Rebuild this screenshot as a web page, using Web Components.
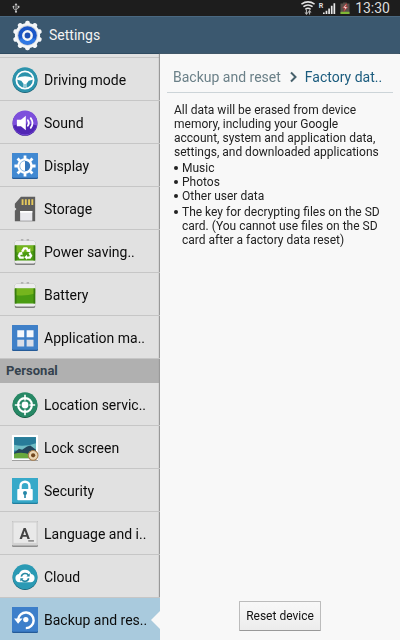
<!DOCTYPE html>
<html lang="en">
<head>
<meta charset="utf-8">
<meta name="viewport" content="width=device-width, initial-scale=1">
<title>Settings</title>
<style>
html, body {
    height: 100%;
    margin: 0;
}

body {
    font-family: Roboto, "Liberation Sans", sans-serif;
    background: #f8f8f8;
    color: #111;
}
</style>
</head>
<body>

<settings-layout>
    <status-bar slot="status" time="13:30"></status-bar>
    <app-bar slot="header">Settings</app-bar>

    <settings-item slot="sidebar" icon="driving">Driving mode</settings-item>
    <settings-item slot="sidebar" icon="sound">Sound</settings-item>
    <settings-item slot="sidebar" icon="display">Display</settings-item>
    <settings-item slot="sidebar" icon="storage">Storage</settings-item>
    <settings-item slot="sidebar" icon="power">Power saving..</settings-item>
    <settings-item slot="sidebar" icon="battery">Battery</settings-item>
    <settings-item slot="sidebar" icon="apps">Application ma..</settings-item>
    <settings-section slot="sidebar">Personal</settings-section>
    <settings-item slot="sidebar" icon="location">Location servic..</settings-item>
    <settings-item slot="sidebar" icon="lock">Lock screen</settings-item>
    <settings-item slot="sidebar" icon="security">Security</settings-item>
    <settings-item slot="sidebar" icon="language">Language and i..</settings-item>
    <settings-item slot="sidebar" icon="cloud">Cloud</settings-item>
    <settings-item slot="sidebar" icon="backup" selected>Backup and res..</settings-item>

    <reset-panel slot="main">
        <span slot="parent">Backup and reset</span>
        <span slot="current">Factory dat..</span>
        <span slot="action">Reset device</span>
    </reset-panel>
</settings-layout>

<script>
const ICONS = {
    gear: `
        <g fill="#f4f6f8">
            <circle cx="16" cy="16" r="13"/>
            <rect x="13.6" y="0.8" width="4.8" height="30.4" rx="2"/>
            <rect x="13.6" y="0.8" width="4.8" height="30.4" rx="2" transform="rotate(36 16 16)"/>
            <rect x="13.6" y="0.8" width="4.8" height="30.4" rx="2" transform="rotate(72 16 16)"/>
            <rect x="13.6" y="0.8" width="4.8" height="30.4" rx="2" transform="rotate(108 16 16)"/>
            <rect x="13.6" y="0.8" width="4.8" height="30.4" rx="2" transform="rotate(144 16 16)"/>
        </g>
        <circle cx="16" cy="16" r="10.6" fill="#cdd3da"/>
        <circle cx="16" cy="16" r="9.6" fill="#1a56c8"/>
        <path d="M7 19a9.6 9.6 0 0 0 18 0z" fill="#2f78e4"/>
        <circle cx="16" cy="16" r="4.3" fill="#1d4fb4" stroke="#f4f6f8" stroke-width="2.6"/>`,
    driving: `
        <circle cx="16" cy="16.6" r="15.4" fill="#1b6478"/>
        <circle cx="16" cy="15.6" r="15.2" fill="#2c93ac"/>
        <circle cx="16" cy="16" r="10.6" fill="none" stroke="#fff" stroke-width="2.2"/>
        <path d="M6 13.500q10-4.500 20 0l-.4 2.200-5 1.300-2.800 3.500v5h-3.600v-5l-2.800-3.500-5-1.300z" fill="#fff"/>
        <path d="M16 21v5" stroke="#2c93ac" stroke-width="1.200"/>`,
    sound: `
        <circle cx="16" cy="16.500" r="15.300" fill="#3f1c9c"/>
        <circle cx="16" cy="15.700" r="15.200" fill="#7d4fdc"/>
        <path d="M1.500 19a15 15 0 0 0 29 0q-14-5-29 0z" fill="#5026b4"/>
        <path d="M6 12h5l6-5v18l-6-5H6z" fill="#fff"/>
        <path d="M19.500 12.500q2.600 3.500 0 7M23 10q4.500 6 0 12" fill="none" stroke="#fff" stroke-width="2.100" stroke-linecap="round"/>`,
    display: `
        <rect width="32" height="32" rx="1.500" fill="#255b98"/>
        <rect width="32" height="30.500" rx="1.500" fill="#4189d2"/>
        <g stroke="#fff" stroke-width="3.400">
            <path d="M16 3v26M3 16h26M6.800 6.800l18.400 18.400M25.200 6.800L6.800 25.200"/>
        </g>
        <circle cx="16" cy="16" r="9.500" fill="#fff"/>
        <path d="M16 9.500a6.500 6.500 0 0 1 0 13z" fill="#3577bd"/>
        <path d="M16 9.500a6.500 6.500 0 0 0 0 13" fill="none" stroke="#6ea6dc" stroke-width="1"/>`,
    storage: `
        <path d="M3.500 9.500L11 1h17.500v30h-25V18l2-2-2-2z" fill="#5e5e5e"/>
        <path d="M13 4v7M17 4v7M21 4v7M25 4v7" stroke="#e5c95c" stroke-width="2.300"/>
        <rect x="10" y="18.500" width="15" height="12" fill="#e9e9ed"/>
        <path d="M10 18.500h15v2H10z" fill="#fff"/>`,
    battery: `
        <path d="M11 0h3v3h-3zM18 0h3v3h-3z" fill="#b2b2b2"/>
        <rect x="3.500" y="2" width="25" height="30" rx="2" fill="#7f7f7f"/>
        <rect x="3.500" y="2" width="25" height="28" rx="2" fill="#ededed"/>
        <rect x="3.500" y="8" width="25" height="18.500" fill="#4a9c12"/>
        <path d="M3.500 8h25v6q-12 4-25 2z" fill="#75b51d"/>
        <path d="M3.500 8h2v18.500h-2zM26.500 8h2v18.500h-2z" fill="#387b10"/>`,
    apps: `
        <rect width="32" height="32" rx="1.500" fill="#255b98"/>
        <rect width="32" height="30.500" rx="1.500" fill="#3f80c8"/>
        <path d="M6.500 6.500h8.500v8.500H6.500zM18 6.500h8.500v8.500H18z" fill="#f5f8fc"/>
        <path d="M6.500 18h8.500v8.500H6.500zM18 18h8.500v8.500H18z" fill="#d9dee8"/>`,
    location: `
        <circle cx="16" cy="16.600" r="15.300" fill="#0e593f"/>
        <circle cx="16" cy="15.600" r="15.200" fill="#278865"/>
        <circle cx="16" cy="16" r="8.500" fill="none" stroke="#fff" stroke-width="2.600"/>
        <path d="M16 3.500v7M16 21.500v7M3.500 16h7M21.500 16h7" stroke="#fff" stroke-width="2"/>
        <circle cx="16" cy="16" r="4.200" fill="#fff"/>`,
    lock: `
        <rect y="1" width="32" height="31" fill="#8a8a8a"/>
        <rect width="32" height="31" fill="#fff"/>
        <path d="M2.500 2.500h27v26h-27z" fill="#287c99"/>
        <path d="M2.500 12q13 3 27-2v9h-27z" fill="#70bdc5"/>
        <path d="M2.500 22l6-5 4 1 6-4 4-1 7 5v7h-27z" fill="#24465b"/>
        <path d="M2.500 23q10-3 20 1l7 4.500h-27z" fill="#68a83c"/>
        <circle cx="26" cy="25" r="6" fill="#ead6b3" stroke="#a57a48" stroke-width="1.300"/>
        <circle cx="26" cy="25" r="2.600" fill="#73491f"/>`,
    security: `
        <rect width="32" height="32" rx="1.500" fill="#217f9e"/>
        <rect width="32" height="30.500" rx="1.500" fill="#37a9c9"/>
        <path d="M10.500 14V10a5.500 5.500 0 0 1 11 0v4" fill="none" stroke="#fff" stroke-width="3"/>
        <rect x="6.500" y="13.500" width="19" height="14" rx="1" fill="#fff"/>
        <circle cx="16" cy="18.500" r="2.500" fill="#2688a8"/>
        <path d="M15 19h2v5.500h-2z" fill="#2688a8"/>`,
    language: `
        <rect width="32" height="32" rx="1.500" fill="#8e8e8e"/>
        <rect width="32" height="30" rx="1.500" fill="#d2d2d2"/>
        <path d="M2 2h28v25H2z" fill="#e9e9e9"/>
        <path d="M20 24.500h7" stroke="#666" stroke-width="1.500"/>
        <text x="15.500" y="22" text-anchor="middle" font-family="Roboto, sans-serif" font-size="19" font-weight="700" fill="#444">A</text>`,
    cloud: `
        <circle cx="16" cy="16.600" r="15.300" fill="#16657a"/>
        <circle cx="16" cy="15.600" r="15.200" fill="#2b9ab4"/>
        <path d="M9 22.500a5.200 5.200 0 0 1-.5-10.300 8 8 0 0 1 15 0 5.200 5.200 0 0 1-.5 10.300z" fill="#fff"/>
        <path d="M11.500 15.500a4.800 4.800 0 0 1 8.800-1.500M20.500 17.500a4.800 4.800 0 0 1-8.800 1.500" fill="none" stroke="#2789a2" stroke-width="2"/>
        <path d="M21.800 11.500v4h-4zM10.200 21.500v-4h4z" fill="#2789a2"/>`,
    backup: `
        <rect width="32" height="32" rx="1.500" fill="#255b98"/>
        <rect width="32" height="30.500" rx="1.500" fill="#3d7fca"/>
        <path d="M7.500 15.500a9.600 9.600 0 1 1 9.500 10.500" fill="none" stroke="#fff" stroke-width="3"/>
        <path d="M2.500 14h10.500l-5.500 6.500z" fill="#fff"/>
        <circle cx="17" cy="15.500" r="3.300" fill="#fff"/>`,
    usb: `
        <path d="M16 4v24M8 13v5l8 5M24 12v4l-8 5" fill="none" stroke="#c8c8c8" stroke-width="2.600"/>
        <path d="M16 0l5 7H11z" fill="#c8c8c8"/>
        <circle cx="8" cy="12" r="3" fill="#c8c8c8"/>
        <circle cx="16" cy="28" r="3.500" fill="#c8c8c8"/>
        <path d="M21 9h6v6h-6z" fill="#c8c8c8"/>`,
    wifi: `
        <g fill="none" stroke="#e4e4e4" stroke-width="3.600">
            <path d="M1 7q15-10 30 0M5.500 13q10.500-8 21 0M10 19q6-5 12 0"/>
        </g>
        <path d="M12.500 20v8M19.500 31v-8" stroke="#b5b5b5" stroke-width="2.600"/>
        <path d="M8 26h9l-4.500 6zM15 26h9l-4.500-6z" fill="#b5b5b5"/>`,
    signal: `
        <path d="M0 32v-4h4.500v4zM7 32v-9h4.500v9zM14 32V17h4.500v15zM21 32V10h4.500v22zM28 32V3h4.500v29z" fill="#e8e8e8"/>`,
    charge: `
        <path d="M11 1h10v3h7v28H4V4h7z" fill="#5a504a"/>
        <path d="M4 26h24v6H4z" fill="#7fb735"/>
        <path d="M19 5l-9 11h6l-3 9 10-12h-6l4-8z" fill="#fff" stroke="#b93030" stroke-width="2"/>`
};

// The recycling battery is the plain one with arrows on top
ICONS.power = ICONS.battery + `
    <g fill="none" stroke="#fff" stroke-width="2.800">
        <path d="M12.500 15.500l2.500-4h3l2 3"/>
        <path d="M21.500 17l2 3.500-1.500 2.500h-4"/>
        <path d="M14.500 23H10l-1.500-2.500 2-3.500"/>
    </g>
    <path d="M22.500 11.500v5l-5-1.500zM18.500 19.500v6l-3.500-3zM7.500 17.500l5-2 .5 4.500z" fill="#fff"/>`;

class BaseElement extends HTMLElement {

    connectedCallback(){
        if(this.shadowRoot) return;
        const template = document.createElement('template');
        template.innerHTML = `<style>${this.styles}</style>${this.template}`;
        this.attachShadow({mode: 'open'}).appendChild(template.content.cloneNode(true));
    }

}

class SettingsIcon extends BaseElement {

    get styles(){
        return `
:host {
    display: block;
    flex: none;
    width: var(--icon-size, 26px);
    height: var(--icon-size, 26px);
}

svg {
    display: block;
    width: 100%;
    height: 100%;
    overflow: visible;
}`
    }

    get template(){
        return `<svg viewBox="0 0 32 32" aria-hidden="true">${ICONS[this.getAttribute('name')] || ''}</svg>`
    }

}

class StatusBar extends BaseElement {

    get styles(){
        return `
:host {
    display: flex;
    align-items: center;
    gap: 4px;
    height: 16px;
    padding: 0 10px 0 11px;
    background: #1d1d1d;
    color: #dcdcdc;
    font-size: 14px;
    line-height: 16px;
    --icon-size: 12px;
}

.stretch {
    flex: 1;
}

.usb {
    --icon-size: 10px;
}

.wifi {
    --icon-size: 14px;
}

.signal {
    display: flex;
}

.roaming {
    font-size: 7px;
    font-weight: bold;
    line-height: 8px;
}`
    }

    get template(){
        return `
            <settings-icon class="usb" name="usb"></settings-icon>
            <span class="stretch"></span>
            <settings-icon class="wifi" name="wifi"></settings-icon>
            <span class="signal">
                <span class="roaming">R</span>
                <settings-icon name="signal"></settings-icon>
            </span>
            <settings-icon name="charge"></settings-icon>
            <time>${this.getAttribute('time')}</time>`
    }

}

class AppBar extends BaseElement {

    get styles(){
        return `
:host {
    display: flex;
    align-items: center;
    gap: 6px;
    height: 38px;
    padding: 0 12px;
    box-sizing: border-box;
    background: #3b586f;
    border-top: 1px solid #4a6880;
    border-bottom: 1px solid #2f4b60;
    color: #f4f4f4;
    --icon-size: 31px;
}

h1 {
    margin: 0;
    font-size: 14px;
    font-weight: normal;
}`
    }

    get template(){
        return `<settings-icon name="gear"></settings-icon><h1><slot></slot></h1>`
    }

}

class SettingsSection extends BaseElement {

    get styles(){
        return `
:host {
    display: block;
    flex: none;
    background: #b0b0b0;
}

h2 {
    margin: 0;
    padding: 0 6px;
    color: #34424e;
    font-size: 13px;
    font-weight: bold;
    line-height: 24px;
}`
    }

    get template(){
        return `<h2><slot></slot></h2>`
    }

}

class SettingsItem extends BaseElement {

    get styles(){
        return `
:host {
    display: block;
    flex: none;
    position: relative;
}

a {
    display: flex;
    align-items: center;
    gap: 6px;
    height: 43px;
    padding: 2px 0 0 12px;
    box-sizing: border-box;
    border-bottom: 1px solid #c6c6c6;
    color: #0c0c0c;
    font-size: 14px;
    white-space: nowrap;
    text-decoration: none;
}

:host([selected]) a {
    background: #a9cadd;
    border-bottom-color: #a9cadd;
}

/* Notch that points from the content to the selected item */
:host([selected])::after {
    content: "";
    position: absolute;
    top: 13px;
    right: 0;
    border: 9px solid transparent;
    border-left-width: 0;
    border-right-color: #f8f8f8;
}`
    }

    get template(){
        return `
            <a href="#${this.getAttribute('icon')}">
                <settings-icon name="${this.getAttribute('icon')}"></settings-icon>
                <span><slot></slot></span>
            </a>`
    }

}

class ResetPanel extends BaseElement {

    get styles(){
        return `
:host {
    display: flex;
    flex-direction: column;
    min-height: 100%;
    padding: 0 7px 9px;
    box-sizing: border-box;
    font-size: 12px;
    line-height: 14px;
    color: #222;
}

nav {
    display: flex;
    align-items: center;
    gap: 6px;
    height: 39px;
    padding: 8px 6px 0;
    box-sizing: border-box;
    border-bottom: 1px solid #ccd4d8;
    font-size: 14px;
    line-height: 20px;
    white-space: nowrap;
}

nav a {
    color: #6b8088;
    text-decoration: none;
}

nav b {
    color: #1b5c7e;
    font-weight: normal;
}

nav svg {
    flex: none;
    width: 12px;
    height: 12px;
}

article {
    flex: 1;
    padding: 10px 8px 10px 7px;
}

p, ul {
    margin: 0 0 2px;
}

ul {
    padding: 0;
    list-style: none;
}

li {
    display: flex;
    gap: 4px;
}

li::before {
    content: "";
    flex: none;
    width: 4px;
    height: 4px;
    margin-top: 5px;
    border-radius: 50%;
    background: #222;
}

li:last-child {
    margin-top: 2px;
}

button {
    align-self: center;
    height: 30px;
    padding: 0 6px;
    background: linear-gradient(#f8f8f8, #ececec);
    border: 1px solid #bcbcbc;
    border-bottom-color: #999;
    border-radius: 1px;
    color: #111;
    font: inherit;
}`
    }

    get template(){
        return `
            <nav aria-label="Breadcrumb">
                <a href="#backup"><slot name="parent"></slot></a>
                <svg viewBox="0 0 12 12" aria-hidden="true"><path d="M4 1.500L8.500 6 4 10.500" fill="none" stroke="#47616c" stroke-width="2"/></svg>
                <b><slot name="current"></slot></b>
            </nav>
            <article>
                <p>All data will be erased from device memory, including your Google account, system and application data, settings, and downloaded applications</p>
                <ul>
                    <li>Music</li>
                    <li>Photos</li>
                    <li>Other user data</li>
                    <li>The key for decrypting files on the SD card. (You cannot use files on the SD card after a factory data reset)</li>
                </ul>
            </article>
            <button type="button"><slot name="action"></slot></button>`
    }

}

class SettingsLayout extends BaseElement {

    get styles(){
        return `
:host {
    display: flex;
    flex-direction: column;
    height: 100vh;
    overflow: hidden;
}

main {
    display: flex;
    flex: 1;
    min-height: 0;
}

main > * {
    overflow-y: auto;
    scrollbar-width: none;
}

aside {
    display: flex;
    flex-direction: column;
    width: 40%;
    padding-top: 3px;
    box-sizing: border-box;
    background: #e1e1e1;
}

/* Lower edge of the item scrolled out above */
aside::before {
    content: "";
    flex: none;
    height: 1px;
    background: #c6c6c6;
}

.wrapper {
    flex: 1;
    min-width: 0;
    background: #f8f8f8;
    box-shadow: -1px 0 1px #999;
}`
    }

    get template(){
        return `
            <slot name="status"></slot>
            <slot name="header"></slot>
            <main>
                <aside><slot name="sidebar"></slot></aside>
                <div class="wrapper"><slot name="main"></slot></div>
            </main>`
    }

}

window.customElements.define('settings-icon', SettingsIcon);
window.customElements.define('status-bar', StatusBar);
window.customElements.define('app-bar', AppBar);
window.customElements.define('settings-section', SettingsSection);
window.customElements.define('settings-item', SettingsItem);
window.customElements.define('reset-panel', ResetPanel);
window.customElements.define('settings-layout', SettingsLayout);
</script>
</body>
</html>
